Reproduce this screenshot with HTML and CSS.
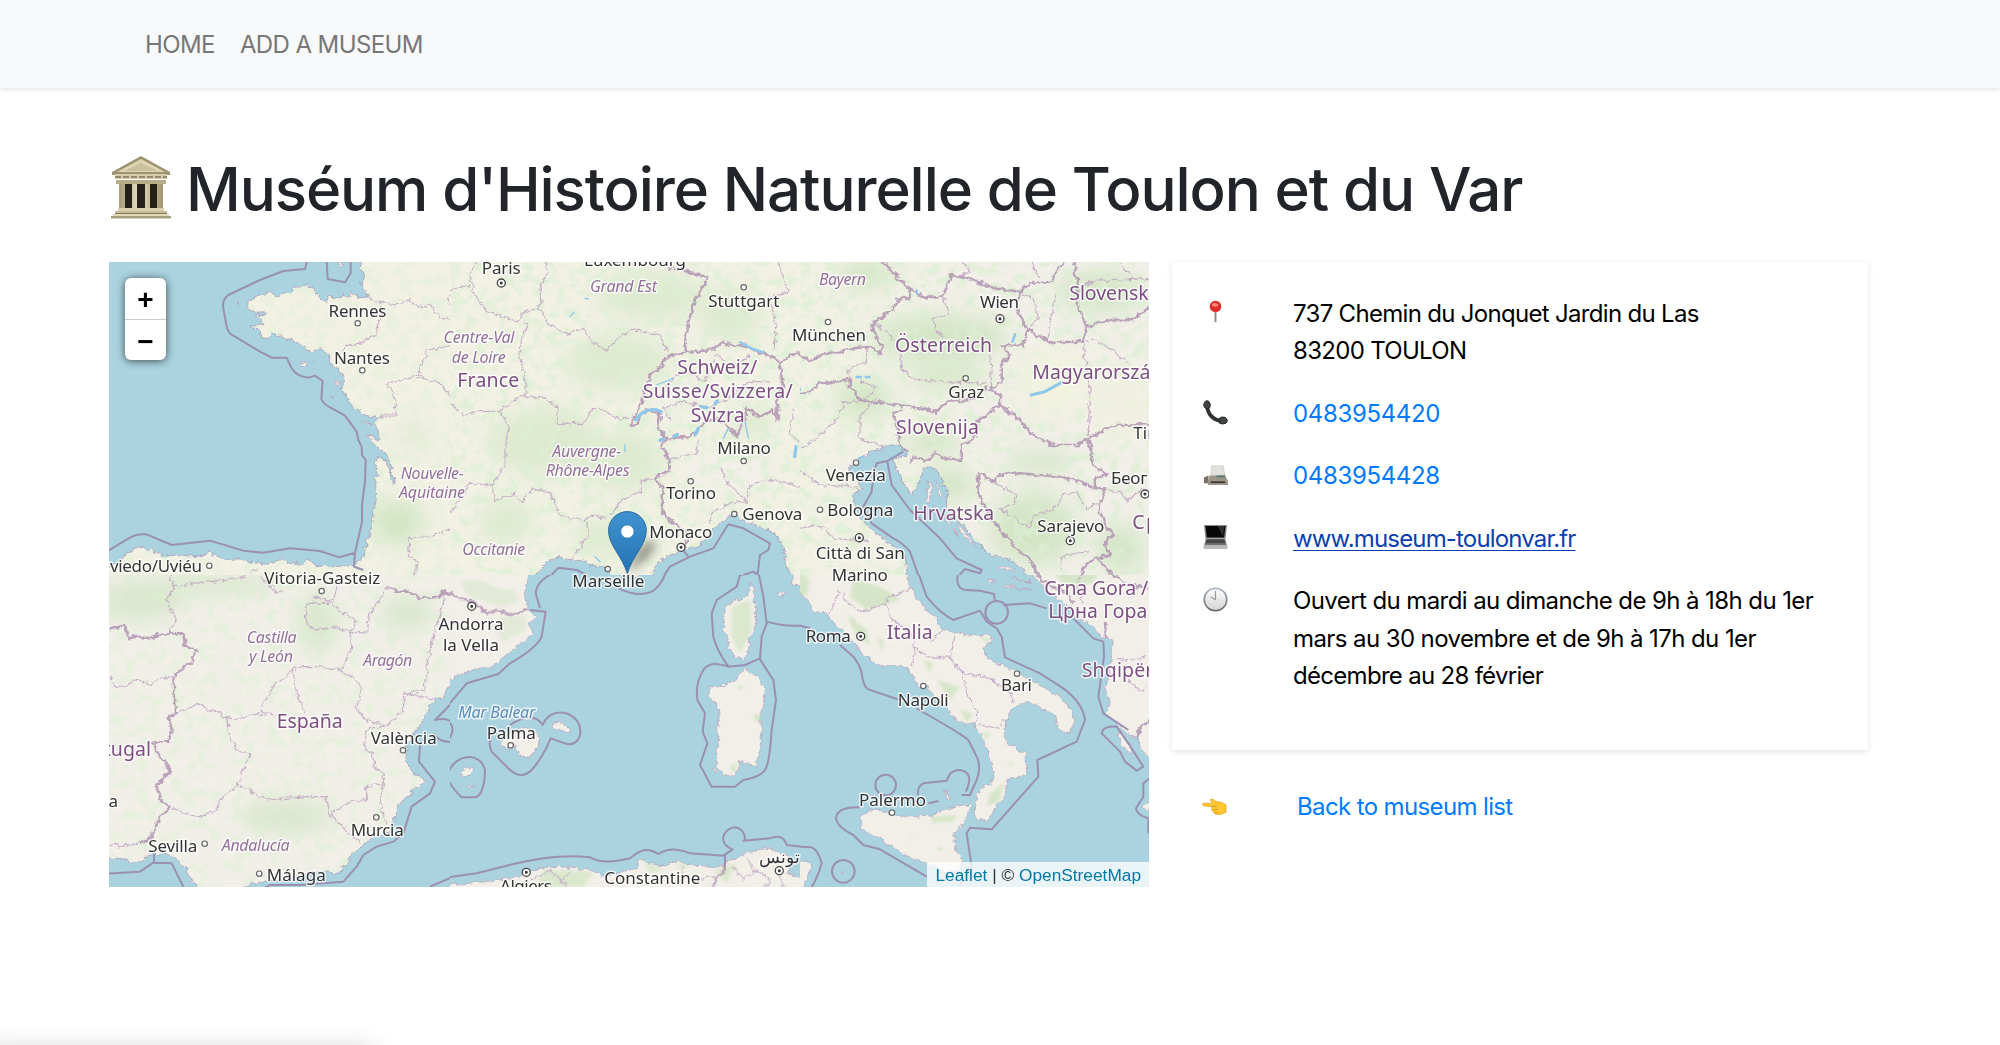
FILE: index.html
```html
<!DOCTYPE html>
<html lang="fr">
<head>
<meta charset="utf-8">
<title>Muséum d'Histoire Naturelle de Toulon et du Var</title>
<link rel="stylesheet" href="styles.css">
</head>
<body>
<nav class="navbar">
  <a href="#">HOME</a>
  <a href="#" class="nav-add">ADD A MUSEUM</a>
</nav>
<main class="container">
  <h1 class="title">
    <svg class="title-icon" viewBox="0 0 62 64">
      <defs><linearGradient id="stone" x1="0" x2="1"><stop offset="0" stop-color="#a59c78"/><stop offset=".45" stop-color="#e6dfc0"/><stop offset="1" stop-color="#a1976f"/></linearGradient></defs>
      <path d="M31 1 60 17v3H2v-3z" fill="#9d9370"/><path d="M31 4 55 17H7z" fill="#ddd5b3"/><path d="M31 8 48 16H14z" fill="#c9c09c"/>
      <path d="M5 19h52v5H5z" fill="#d5ccaa"/><path d="M5 22h52" stroke="#7d7458" stroke-width="1.6" stroke-dasharray="6 2"/><path d="M6 25h50v4H6z" fill="#b8ae88"/>
      <path d="M14 29h34v26H14z" fill="#272019"/>
      <path d="M9 29h6v25H9zM22 29h5v25h-5zM35 29h5v25h-5zM47 29h6v25h-6z" fill="url(#stone)"/>
      <path d="M8 53h46v4H8z" fill="#d9d1ae"/><path d="M5 56h52v3H5z" fill="#c5bc98"/><path d="M3 59h56v2H3z" fill="#e0d8b7"/><path d="M1 61h60v2.500H1z" fill="#a79e7c"/><path d="M5 58.500h52" stroke="#857c5e"/>
    </svg>
    <span class="title-text">Muséum d'Histoire Naturelle de Toulon et du Var</span>
  </h1>
  <div class="columns">
    <section class="map">
      <svg class="map-canvas" viewBox="109 262 1040 625">
        <defs>
          <filter id="terrain" x="0" y="0" width="100%" height="100%">
            <feTurbulence type="fractalNoise" baseFrequency=".028 .032" numOctaves="5" seed="8"/>
            <feColorMatrix values="0 0 0 0 .72  0 0 0 0 .86  0 0 0 0 .65  0 4.500 0 0 -2.100"/>
          </filter>
          <filter id="blur" x="-50%" y="-50%" width="200%" height="200%"><feGaussianBlur stdDeviation="28"/></filter>
          <filter id="shade" x="-50%" y="-50%" width="200%" height="200%"><feGaussianBlur stdDeviation="4"/></filter>
          <filter id="rough" filterUnits="userSpaceOnUse" x="-20" y="-20" width="1090" height="1000">
            <feTurbulence type="fractalNoise" baseFrequency=".06" numOctaves="3" seed="3"/>
            <feDisplacementMap in="SourceGraphic" scale="20" xChannelSelector="R" yChannelSelector="G"/>
          </filter>
          <linearGradient id="pin" x2="0" y2="1"><stop stop-color="#3f92cf"/><stop offset="1" stop-color="#2472b4"/></linearGradient>
          <linearGradient id="fade"><stop stop-color="#f2f1e4"/><stop offset=".6" stop-color="#f2efe9"/></linearGradient>
        </defs>

        <!-- south west: Spain and Portugal -->
        <svg x="100" y="570" width="350" height="320" viewBox="0 0 1050 960">
          <rect class="land" width="1050" height="960"/>
          <g class="green soft" filter="url(#blur)"><ellipse cx="560" cy="740" rx="140" ry="50"/><ellipse cx="650" cy="160" rx="60" ry="90"/><ellipse cx="120" cy="90" rx="130" ry="60"/><ellipse cx="920" cy="130" rx="80" ry="50"/><ellipse cx="350" cy="40" rx="200" ry="30"/></g>
          <rect width="1050" height="960" filter="url(#terrain)" opacity=".5"/>
          <g filter="url(#rough)">
            <path class="sea" d="M1080 300 1030 380 1005 388 950 480 920 520 915 560 935 605 975 635 950 655 905 690 880 750 870 790 820 800 760 850 720 910 670 905 520 930 470 940 430 950 400 990H1080ZM-30 865 60 865 115 878 160 850 215 855 260 900 265 915 290 945 285 990H-30Z"/>
            <path class="region" d="M30 320 45 355 80 345 110 325 150 345 180 325 220 320M30 825 80 830 125 815M205 190 230 150 200 90 220 55 210 0M220 50 330 35 430 20 470 0 530 70 550 60M620 100 690 100 770 155 750 185 700 170 650 180 620 165ZM640 80 700 95 710 50M750 185 800 190 810 130 860 55M750 190 755 230 725 300 660 290 590 290 520 350 490 400 485 430 410 445 380 440 290 402 230 430M580 310 590 370 615 430M485 430 530 435M725 300 780 340 780 380 765 410 800 450 860 470 910 420 915 370 975 360 985 260 995 220 1030 100 1030 60M915 370 1005 388M380 440 385 485 410 540 450 550 430 600 415 645 360 690 350 720 290 745 215 715M415 645 500 690 620 680 680 680 690 735 760 690 800 690 800 650 850 640 840 700 860 760M690 735 740 780 780 820M850 640 850 610 820 590 820 550 790 530 800 480 860 470"/>
            <path class="country" d="M20 180 75 165 85 205 110 200 155 205 185 190 250 190 255 230 290 240 270 280 230 310 220 325 228 430 205 440 215 480 205 512 160 518 180 560 210 600 170 650 180 690 210 715 180 740 155 800 125 820M860 50 890 65 920 65 965 85 1020 80 1030 65 1060 75"/>
          </g>
          <path class="maritime" d="M0 912 120 905 160 878 215 880 255 960M162 850V880M1060 395 1005 450Q1050 440 1060 465M1060 515Q1020 520 1000 490M960 520 957 575 1005 635 990 670 935 710 910 790 880 815 830 830 790 855 770 890 730 935 600 945 510 945 480 960M1060 920 990 950"/>
        </svg>

        <!-- south: Catalonia, islands and the Algerian coast -->
        <svg x="450" y="570" width="350" height="320" viewBox="0 0 1050 960">
          <rect class="water" width="1050" height="960"/>
          <g filter="url(#rough)">
            <path class="isle" d="M-30 335 60 302 130 285 200 230 245 195 240 160 255 145 245 125 232 110 225 60 235 20 260-30H-30ZM465-30 490 5 520 15 560 18 610 10 625-30ZM1030-30 1025 45 1080 50V-30ZM905 38 912 80 918 110 915 170 900 200 895 245 880 270 850 250 835 235 835 200 820 180 822 130 830 105 860 88 890 80 898 50ZM885 295 920 320 940 350 945 400 930 430 935 480 930 540 920 588 870 575 865 600 845 620 820 612 800 590 800 550 810 500 800 480 805 440 800 400 775 380 775 350 810 352 850 335 870 310ZM145 525 200 480 240 475 270 505 260 540 230 565 205 550 195 530 170 535ZM308 462 340 460 360 480 355 490 335 480 310 472ZM32 610 45 595 70 590 72 600 50 622 35 620ZM-30 990V945L60 940 190 925 240 905 300 890 370 895 430 900 460 920 560 895 570 870 600 880 650 890 680 868 720 885 800 890 830 880 870 855 950 832 1000 850 1030 880 1010 910 1080 930V990ZM50 640 70 650 55 652ZM980 70 1012 66 1000 76 984 76ZM780 590 800 600 795 606Z"/>
          </g>
          <g class="green" filter="url(#shade)"><path d="M30 40Q70 20 110 40T190 60L210 90Q160 120 120 100T60 85ZM120 160 160 140 230 140 225 180 160 215Z" opacity=".4"/><path d="M845 110 900 90 905 180 870 250 845 200Z" opacity=".6"/><path d="M840 585 860 585 850 610ZM910 430 930 440 920 460ZM865 345 880 350 870 360Z"/><path d="M280 900 430 905 400 950H260ZM580 875 640 900 600 910ZM680 880 720 890 690 900ZM790 900 860 880 830 940Z" opacity=".6"/></g>
          <g filter="url(#rough)">
            <path class="region" d="M240 930 300 900 350 950M360 900 330 945M700 890 690 950M740 930 800 920M850 890 880 930 920 900 960 930 940 960M890 860 910 900M975 890 1000 950"/>
            <path class="country" d="M-10 68 60 95 90 110 110 130 140 120 180 135 235 118M825 870 825 895 785 950"/>
          </g>
          <path class="maritime" d="M-5 922 80 910 200 880Q325 850 420 862 460 885 540 865C570 840 590 830 625 852 660 830 700 840 720 850L820 857 848 838C800 820 820 775 855 772 885 775 890 815 880 812L960 805Q1000 790 1010 825L1055 830M825 855 825 890M-5 405 50 340 145 312 180 280 Q260 235 275 200L287 125 240 120M270 115 257 70Q260 30 320 5L370-3M505 55Q570 85 610 62 640 40 650-3M925 5 870 15 860 50 800 90 785 130 790 200Q800 240 835 290L885 285 930 265 935 200 950 160 940 80ZM835 290Q780 270 760 300 735 340 742 390L765 430 758 485 772 520 750 585 785 650 855 650 880 630Q940 620 950 590 960 560 965 480L978 390 970 330 930 268M950 155Q1000 170 1055 167M180 465Q250 420 278 465C300 410 370 420 388 465 400 510 370 530 345 520L302 505Q280 560 245 600 215 630 180 600L125 545Q115 525 122 505M-5 610C10 555 90 540 105 600 105 640 95 680 75 682H35Q10 660-5 630M-5 455Q20 475-5 510"/>
        </svg>

        <!-- south east: southern Italy and the lower Adriatic -->
        <svg x="800" y="570" width="350" height="320" viewBox="0 0 1050 960">
          <rect class="water" width="1050" height="960"/>
          <g filter="url(#rough)">
            <path class="isle" d="M-30-30V40L20 90 40 120 80 130 110 170 160 215 180 245 240 290 300 290 330 300 340 325 360 350 385 345 400 380 445 415 450 435 490 465 520 458 545 500 570 560 580 610 575 640 540 655 520 720 530 750 570 748 590 700 615 680 620 630 680 612 678 550 620 520 610 490 620 450 640 410 680 395 760 430 775 475 810 492 825 450 800 400 760 370 690 330 640 300 560 265 548 235 580 210 570 195 500 195 430 180 400 140 350 90 330 50 320-30ZM515 705 490 760 465 790 465 830 485 870 480 900 440 905 400 885 340 865 290 840 230 800 185 780 182 745 210 720 250 722 270 735 310 742 400 735 450 715ZM660-30 730 50 790 100 830 140 880 170 910 205 940 210 935 260 915 350 930 400 915 430 950 460 990 500 1010 500 1030 545 1080 590V-30ZM-30 990V900L20 870 35 885 15 940 5 990ZM950 495 970 490 1000 550 980 545ZM1050 690 1030 710 1050 730ZM610 45 690 60 610 50ZM630 20 700 40 640 26ZM560 30 590 34 570 38ZM122 900 135 904 128 910ZM430 662 450 680 445 690Z"/>
          </g>
          <g class="green" filter="url(#shade)" opacity=".7"><path d="M-5 0 30 30 20 80-5 70ZM160 20 260 60 300 90 200 120 150 80ZM140 130 200 180 210 230 160 180ZM230 200 250 210 250 250ZM370 270 400 280 390 310ZM410 330 480 350 450 390ZM480 420 520 430 500 460ZM545 488 570 490 560 510ZM540 200 570 205 560 220ZM570 670 610 640 600 690 560 710ZM625 575 640 578 632 590ZM390 740 470 735 460 755 400 758ZM750 0H900L880 40 800 50ZM330 800 340 800 335 808ZM410 830 430 830 425 845Z"/></g>
          <g filter="url(#rough)">
            <path class="region" d="M130 60 130 90 185 125 260 100 265 80 335 55M120 60 90 130M260 100 270 140 340 200 345 255M345 230 380 260 450 265 460 220 465 195M430 180 390 215M450 265 490 310 560 320 635 370 640 400M490 310 500 370 530 430 530 460M540 465 600 475 605 450 625 450M345 255 330 290M850 0 830 40 850 100M950 265 1000 270 1035 260M985 330 1020 365 1040 350"/>
            <path class="country" d="M690-10 740 40 800 70 820 100M915 155 918 205M920 0 980 40 1050 60M1050 450 1020 470 1010 510"/>
          </g>
          <path class="maritime" d="M-5 165 30 175M120 225 160 260Q180 285 185 310 190 350 205 358L300 390M350 415 410 450Q480 490 505 510L530 560Q545 590 530 630L510 675H485M498 665C515 625 510 605 480 600 450 600 445 620 440 632L370 640Q350 650 355 675M385 700 415 693M180 712Q110 710 108 745 110 770 160 795L190 825 240 838 380 920M480 945 515 890 500 790 510 773 575 778 715 620 712 570 830 515 855 450Q850 400 790 355L720 310 615 262 605 200 590 175 560 155M350-5 380 80Q420 130 460 150L540 122 560 155M610 105 690 100 740 115M820 145 880 205 910 215 912 260 895 380 910 430 985 480M480-3C460 40 480 60 500 60L540 62 582 72 585 95M905 490Q910 465 950 470L985 520 1030 590 1010 602 975 575 960 545ZM1055 620 1030 640 1030 680 1008 715Q1010 735 1045 745V790M-5 830 35 832Q55 840 65 880 55 920 30 960"/>
          <g class="maritime"><circle cx="257" cy="645" r="31"/><circle cx="130" cy="904" r="34"/><circle cx="590" cy="127" r="34"/></g>
        </svg>

        <!-- north west: Bay of Biscay and Brittany -->
        <svg x="100" y="255" width="350" height="320" viewBox="0 0 1050 960">
          <rect class="land warm" width="1050" height="960"/>
          <g class="green" filter="url(#blur)" opacity=".8"><ellipse cx="890" cy="800" rx="80" ry="65"/><ellipse cx="940" cy="550" rx="50" ry="50" opacity=".3"/></g>
          <rect width="1050" height="960" filter="url(#terrain)" opacity=".45"/>
          <g filter="url(#rough)">
            <path class="sea" d="M-30-30H785L782 40 790 60 783 90 795 110 805 122 780 125 760 118 750 112 742 130 735 118 720 125 705 130 690 122 680 138 665 138 655 125 640 100 628 97 622 84 608 95 580 97 568 110 545 118 530 122 510 110 490 120 470 125 445 138 443 160 465 170 500 175 490 182 465 180 480 195 496 205 470 212 450 213 480 225 487 250 505 250 515 235 540 245 575 255 600 268 620 285 640 290 660 280 690 300 688 325 715 345 735 375 722 400 745 430 765 460 800 480 830 490 825 510 840 540 835 560 825 545 805 535 825 570 860 600 875 640 886 685 880 685 868 640 855 615 830 605 830 640 825 740 815 800 800 870 785 915 765 930 740 930 710 938 680 932 650 935 625 915 600 928 560 920 550 912 520 920 490 928 450 920 420 912 400 915 360 905 330 895 300 902 200 902 170 898 160 880 140 885 130 872 110 880 85 890 65 915 30 930-30 940Z"/>
            <path class="isle" d="M600 325 622 322 618 334 605 330ZM702 378 718 382 712 390ZM692 424 708 428ZM785 498 815 506 790 504ZM803 535 820 545 818 560ZM405 148 415 150ZM712 22 735 24 722 34ZM635 318 645 325Z"/>
            <path class="region" d="M800 122 815 135 840 140 880 150 930 135 955 155 990 150 1020 185 1060 195M840 150 838 200 825 240 800 250 780 268 735 272 728 290M1060 270 985 285 965 320 955 360M830 490 850 483 888 483 885 430 870 400 857 385 900 375 955 362 990 375 1020 385 1060 440M1060 820 1000 840 930 850 925 900 950 920 945 970M1060 110 1040 130 1050 150M440 970 470 940"/>
          </g>
          <path class="maritime" d="M622 15 615 42 550 48 480 75 385 120Q365 135 370 160L380 215Q385 235 400 242L480 290 515 308 560 308 575 340Q590 365 625 368L645 362 668 378 664 432Q670 447 690 457L735 482 770 530 775 555 785 575 786 600 797 615 795 680 786 750 786 800 765 893 718 907 660 888 570 880 490 893 430 887 330 857 215 870 140 838Q110 835 90 848L20 890M680 15 683 72 735 82 752 55V15M765 893 762 935 790 945"/>
        </svg>

        <!-- north: France, Switzerland and Piedmont -->
        <svg x="450" y="255" width="350" height="320" viewBox="0 0 1050 960">
          <rect class="land warm" width="1050" height="960"/>
          <g class="green" filter="url(#blur)" opacity=".5"><ellipse cx="600" cy="120" rx="160" ry="70"/><ellipse cx="500" cy="320" rx="150" ry="80"/><ellipse cx="280" cy="560" rx="160" ry="100"/><ellipse cx="170" cy="800" rx="80" ry="60"/><ellipse cx="520" cy="620" rx="110" ry="90"/><ellipse cx="840" cy="180" rx="90" ry="80"/><ellipse cx="900" cy="500" rx="60" ry="40"/><ellipse cx="480" cy="850" rx="110" ry="50"/></g>
          <g fill="#f2efe9" filter="url(#blur)"><ellipse cx="830" cy="650" rx="150" ry="50"/><ellipse cx="650" cy="430" rx="60" ry="60" opacity=".6"/></g>
          <rect width="1050" height="960" filter="url(#terrain)" opacity=".75"/>
          <g filter="url(#rough)">
            <path class="sea" d="M235 990 270 945 300 915 335 903 350 912 400 918 420 930 470 938 490 990ZM590 990 615 935 650 905 700 885 760 865 790 820 840 780 850 776 880 795 940 820 980 840 1000 880 1010 930 1030 990Z"/>
            <path class="region" d="M80 15 60 55 70 110 110 170 160 185 200 200 225 170 265 160 275 130 270 95 290 60 290 15M0 105 60 90M265 160 300 210 350 235 400 220 430 265 470 285 510 245 550 222 590 235 625 235 655 290M220 200 232 215 210 260 215 330 228 380 228 420 190 435 150 468 90 470 35 478-5 440M228 425 290 430 320 460 325 505 400 505 430 460 460 465 500 490 540 490M150 470 178 520 165 580 165 630 125 690 60 685 40 720-5 780M125 690 135 740 190 715 215 740 250 700 300 710 330 780 390 795 410 800 415 840 375 900 360 920M400 795 430 780 470 790M480 780 520 730 575 710 570 680 615 670M660 610 740 595 745 555M810 635 830 680 890 740 900 690 950 670 1060 695M775 810 790 770 850 740 890 745M640 400 700 340 760 380 800 300 850 340 900 300M640 460 700 440 780 460 850 420 900 380 960 380M965 150 980 220 970 290M985 22 1015 110 960 130M640 460 660 500M1030 460 1020 540 1050 560"/>
            <path class="country" d="M650 40 700 45 775 68 735 135 715 200 705 290 760 290 800 275 820 260 850 275 880 270 930 295 960 300 990 325 1020 300 1060 295M705 290 650 305 635 335 600 360 585 410 570 450 540 510 565 505 570 480 600 465 630 470 625 520 650 550 720 545 770 500 800 490 840 520 860 545 885 490 890 460 930 485 965 465 985 495 980 440 1000 400 990 330M650 550 635 570 660 620 655 650 615 670 640 700 635 760 650 790 690 815 715 840 705 875"/>
          </g>
          <g class="lake"><path d="M556 495Q590 450 634 470" stroke-width="9"/><path d="M870 262 905 280 940 292" stroke-width="7"/><path d="M735 540 745 520M752 455 770 458M795 445 802 438M672 545 682 538M630 556 640 552M1038 575 1034 605" stroke-width="10"/><path d="M820 550 835 520M885 500 895 550M620 390 670 370M525 570V590M360 185 372 172M405 130 415 132M435 905 450 920" stroke-width="4"/></g>
          <path class="maritime" d="M640 965 660 935 720 905 790 880 835 808 880 820 960 865 955 885 930 900 922 965M300 965 325 938 380 945 410 960M880 960 910 950 925 960M695 880 715 905"/>
        </svg>

        <!-- north east: Alps, Pannonia and the upper Adriatic -->
        <svg x="800" y="255" width="350" height="320" viewBox="0 0 1050 960">
          <rect fill="url(#fade)" width="1050" height="960"/>
          <g class="green" filter="url(#blur)" opacity=".75"><ellipse cx="420" cy="250" rx="200" ry="70"/><ellipse cx="190" cy="430" rx="80" ry="60"/><ellipse cx="440" cy="370" rx="120" ry="30"/><ellipse cx="400" cy="560" rx="80" ry="40"/><ellipse cx="900" cy="110" rx="130" ry="60"/><ellipse cx="720" cy="620" rx="100" ry="30"/><ellipse cx="450" cy="690" rx="70" ry="50"/><ellipse cx="700" cy="820" rx="130" ry="110"/><ellipse cx="960" cy="880" rx="70" ry="70"/><ellipse cx="200" cy="60" rx="90" ry="40"/></g>
          <rect width="1050" height="960" filter="url(#terrain)" opacity=".75"/>
          <g filter="url(#blur)" opacity=".9"><ellipse cx="760" cy="380" rx="100" ry="110" fill="#f2f3df"/><ellipse cx="960" cy="440" rx="90" ry="120" fill="#f1f1e0"/><ellipse cx="140" cy="640" rx="60" ry="50" fill="#f2efe9"/></g>
          <g filter="url(#rough)">
            <path class="sea" d="M245 578 280 572 315 580 325 600 300 605 275 615 290 640 310 680 335 720 350 700 365 655 380 638 410 645 440 700 440 760 480 800 520 850 570 900 620 910 650 930 720 990H325L315 900 280 875 210 820 170 780 160 720 185 700 150 650 150 630 200 600Z"/>
            <path class="isle" d="M385 675 395 700 390 745 380 740ZM405 675 430 720 420 730ZM430 775 480 850 440 800ZM470 800 530 880 480 830ZM590 935 650 940 620 948ZM400 750 420 785 405 770Z"/>
            <path class="region" d="M490 15 510 50 480 65M690 15 720 70M765 120 750 200 745 250M665 120 700 130 715 190 690 215M430 125 445 180 395 190 410 230 430 245M215 205 260 230 280 260M305 290 300 330 340 375 430 380 560 385M150 370 145 340 200 320 200 280M0 580 40 560 80 520 115 490 130 445 200 430M230 430 180 480 180 550 240 570 245 590M860 250 850 290 870 400 865 540M870 250 930 280 990 330M-5 640 60 690 170 695 180 715M-5 820 60 810 100 850 210 860M550 670 600 690 650 720 640 750 600 760 690 820 700 780 760 765 790 720 830 710 860 760 900 740M920 705 960 710 985 735 1030 700M840 100 870 80 960 75 1060 70M570 300 575 400M960 22 1000 70M780 940 790 900 870 890M180 380 230 400 200 430"/>
            <path class="country" d="M245 15 290 65 330 100 380 130 430 120 455 60 520 75 580 100 660 110 690 85 750 80 795 15M330 100 325 130 290 135 280 165 215 205 225 240 245 270 240 300 215 275 160 280 60 300 30 318-5 300M660 110 650 160 680 220 750 262 850 260 860 215 930 195 1000 195 1050 155M820 15 835 100 830 150 860 215M680 220 670 270 605 275 630 300 605 330 605 380 570 405 600 420 600 450 560 480 530 500 525 550 485 570 485 615 430 610 405 590 385 615 340 605 330 620M-5 415 35 410 60 385 150 375 150 395 180 435 300 450 410 470 440 440 510 435 560 400M325 595 300 570 290 500 280 480 310 460M600 450 640 480 700 540 760 570 830 570 865 550 940 510 1060 508M865 550 880 630 920 660 885 670 885 700 845 680 780 665 720 660 660 655 600 660 575 685 550 655 535 660 535 720 580 800 640 870 690 915 720 970M885 700 915 700 895 760 920 820 940 830 915 870 930 900 880 910 850 940 845 970M890 910 950 970"/>
          </g>
          <g class="lake"><path d="M693 420 735 410 785 382" stroke-width="9"/><path d="M645 238 638 260M170 366H182M198 366H208" stroke-width="8"/><path d="M0 400V405M350 105 352 118M175 610 190 605" stroke-width="6"/></g>
          <path class="maritime" d="M358 970 330 890Q310 865 280 850L215 805 190 755 215 710 222 650 230 625 262 618 310 590M262 620 275 690 330 765 420 850 470 910 545 945 540 955 495 942 470 970"/>
        </svg>

        <g class="dots">
          <circle cx="357.700" cy="323.300" r="2.700"/><circle cx="362.300" cy="370.300" r="2.700"/><circle cx="743.700" cy="287.300" r="2.700"/><circle cx="828" cy="322" r="2.700"/><circle cx="965.700" cy="378.300" r="2.700"/><circle cx="743.700" cy="461" r="2.700"/><circle cx="690.700" cy="481.300" r="2.700"/><circle cx="734.300" cy="514" r="2.700"/><circle cx="856" cy="462.700" r="2.700"/><circle cx="820" cy="509.700" r="2.700"/><circle cx="209.300" cy="565.700" r="2.700"/><circle cx="321.700" cy="591" r="2.700"/><circle cx="403" cy="750.300" r="2.700"/><circle cx="376.300" cy="817.300" r="2.700"/><circle cx="204.700" cy="843.700" r="2.700"/><circle cx="259.300" cy="873.700" r="2.700"/><circle cx="607.700" cy="569" r="2.700"/><circle cx="510.700" cy="745.300" r="2.700"/><circle cx="923.300" cy="686" r="2.700"/><circle cx="1017" cy="673.700" r="2.700"/><circle cx="892" cy="812.700" r="2.700"/>
        </g>
        <g class="dots capitals">
          <circle cx="501.300" cy="283" r="4"/><circle cx="1000" cy="318.700" r="4"/><circle cx="681" cy="547.300" r="4"/><circle cx="1070.300" cy="540.700" r="4"/><circle cx="1145" cy="494" r="4"/><circle cx="859.300" cy="537.700" r="4"/><circle cx="471.700" cy="606.300" r="4"/><circle cx="779.300" cy="870.700" r="4"/><circle cx="526.300" cy="872.300" r="4"/><circle cx="860.700" cy="636.300" r="4"/>
        </g>
        <path class="cores" d="M501.300 283h0M1000 318.700h0M681 547.300h0M1070.300 540.700h0M1145 494h0M859.300 537.700h0M471.700 606.300h0M779.300 870.700h0M526.300 872.300h0M860.700 636.300h0"/>

        <g class="label city">
          <text x="328.500" y="316.500" textLength="58">Rennes</text><text x="334" y="364" textLength="56">Nantes</text><text x="481.700" y="274" textLength="39">Paris</text><text x="584" y="265.500" textLength="102">Luxembourg</text><text x="708.300" y="306.700" textLength="71">Stuttgart</text><text x="980" y="308.300" textLength="39">Wien</text><text x="792" y="341" textLength="74">München</text><text x="948.300" y="397.700" textLength="36">Graz</text><text x="717.300" y="454.300" textLength="53.500">Milano</text><text x="666" y="499.300" textLength="50">Torino</text><text x="649.300" y="537.700" textLength="63">Monaco</text><text x="742.300" y="520" textLength="60">Genova</text><text x="825.700" y="480.700" textLength="60">Venezia</text><text x="827.300" y="516" textLength="66">Bologna</text><text x="1037.300" y="531.700" textLength="67">Sarajevo</text><text x="1111" y="484" textLength="66">Београд</text><text x="1133.300" y="439.300" textLength="79">Timișoara</text><text x="815.700" y="559.300" textLength="89">Città di San</text><text x="831.700" y="581" textLength="56">Marino</text><text x="97" y="571.700" textLength="105">Oviedo/Uviéu</text><text x="264.300" y="584" textLength="116">Vitoria-Gasteiz</text><text x="370.700" y="744" textLength="66">València</text><text x="68" y="807.300" textLength="50">Lisboa</text><text x="350.700" y="835.700" textLength="53">Murcia</text><text x="148.300" y="851.700" textLength="49">Sevilla</text><text x="266.700" y="881" textLength="59">Málaga</text><text x="572.300" y="586.700" textLength="72">Marseille</text><text x="438.500" y="630" textLength="65">Andorra</text><text x="443" y="651" textLength="56">la Vella</text><text x="486.700" y="739" textLength="49">Palma</text><text x="604.300" y="884" textLength="96">Constantine</text><text x="779" y="863" text-anchor="middle">تونس</text><text x="500" y="891.700" textLength="52">Algiers</text><text x="805.700" y="642.300" textLength="45">Roma</text><text x="897.700" y="706" textLength="51">Napoli</text><text x="1001" y="691" textLength="31">Bari</text><text x="859" y="806" textLength="67">Palermo</text>
        </g>
        <g class="label nation">
          <text x="457.300" y="387.300" textLength="62">France</text><text x="1069.300" y="300" textLength="91">Slovensko</text><text x="895" y="352.300" textLength="97">Österreich</text><text x="1032.300" y="379.300" textLength="130">Magyarország</text><text x="896" y="434.300" textLength="83">Slovenija</text><text x="677.300" y="374.300" textLength="80">Schweiz/</text><text x="642.700" y="398.300" textLength="150">Suisse/Svizzera/</text><text x="690.700" y="421.700" textLength="54">Svizra</text><text x="913.300" y="520" textLength="81">Hrvatska</text><text x="1132.300" y="529.300" textLength="70">Србија</text><text x="276.700" y="728.300" textLength="66">España</text><text x="72" y="756" textLength="79">Portugal</text><text x="886.700" y="639" textLength="46">Italia</text><text x="1044.300" y="595" textLength="104">Crna Gora /</text><text x="1048.300" y="618.300" textLength="99">Црна Гора</text><text x="1081.700" y="677.300" textLength="88">Shqipëria</text>
        </g>
        <g class="label area">
          <text x="590" y="291.700" textLength="67">Grand Est</text><text x="819" y="284.700" textLength="47">Bayern</text><text x="443.500" y="343.300" textLength="71">Centre-Val</text><text x="451.700" y="362.700" textLength="54">de Loire</text><text x="552.300" y="456.700" textLength="69">Auvergne-</text><text x="545.700" y="475.700" textLength="84">Rhône-Alpes</text><text x="462.300" y="555" textLength="63">Occitanie</text><text x="400.700" y="479.300" textLength="63">Nouvelle-</text><text x="399" y="498.300" textLength="66">Aquitaine</text><text x="246.700" y="643.300" textLength="50">Castilla</text><text x="249" y="662.300" textLength="44">y León</text><text x="363.300" y="666" textLength="49">Aragón</text><text x="221.700" y="851" textLength="68">Andalucía</text><text class="marine" x="458.300" y="717.700" textLength="77">Mar Balear</text>
        </g>
        <path d="M628 574 634 558Q642 541 652 540 660 546 648 558Z" fill="#222" opacity=".4" filter="url(#shade)"/>
        <path d="M627.400 573.500C622 556 608.500 545 608.500 530.500A18.900 18.900 0 0 1 646.300 530.500C646.300 545 632.500 556 627.400 573.500Z" fill="url(#pin)" stroke="#2e6c97" stroke-width="1"/>
        <circle cx="627.400" cy="531.500" r="6.600" fill="#fff" stroke="#3680b6" stroke-width=".8"/>
      </svg>
      <div class="zoom"><button>+</button><button>−</button></div>
      <div class="credit"><a href="#">Leaflet</a> | © <a href="#">OpenStreetMap</a></div>
    </section>
    <aside class="side">
      <div class="card">
        <div class="row">
          <svg class="icon" viewBox="0 0 26 26"><path d="M13 11v12" stroke="#93877f" stroke-width="2"/><circle cx="13" cy="6.700" r="6" fill="#df2f2a"/><ellipse cx="12.500" cy="5" rx="3.300" ry="2" fill="#ff817a"/></svg>
          <p class="address">737 Chemin du Jonquet Jardin du Las<br>83200 TOULON</p>
        </div>
        <div class="row">
          <svg class="icon" viewBox="0 0 26 26"><path d="M4 3C4 15 11 22 22 22" fill="none" stroke="#303234" stroke-width="4"/><path d="M1 4Q2 0 5.500 1 9 4 7 8L4 9Q0 8 1 4ZM17 19Q19 17 23 18 27 21 24 24 20 26 17 24Z" fill="#424547" stroke="#222"/></svg>
          <p><a class="tel" href="#">0483954420</a></p>
        </div>
        <div class="row">
          <svg class="icon" viewBox="0 0 26 26"><path d="M9 4h12l2 11H8z" fill="#e3e1dc" stroke="#c2beb6" stroke-width=".6"/><path d="M7 14h16l3 6v4H5v-4z" fill="#9d9487"/><path d="M1 16l5-2-1 8H1z" fill="#776f65"/><path d="M14 15h9" stroke="#547d76" stroke-width="2"/><path d="M8 21h15" stroke="#352e28" stroke-width="1.600"/></svg>
          <p><a class="tel" href="#">0483954428</a></p>
        </div>
        <div class="row">
          <svg class="icon" viewBox="0 0 26 26"><path d="M1 0h24l-1.500 14h-21z" fill="#8c8c8c"/><path d="M2.500 1h21L22 13H4z" fill="#080808"/><path d="M15 1h7l-1 11z" fill="#303030"/><path d="M3 14h20l2 8H1z" fill="#777"/><path d="M4 15h18l1 4H3z" fill="#454545"/><path d="M.500 21h25v4H.500z" fill="#bbb"/></svg>
          <p><a class="site" href="#">www.museum-toulonvar.fr</a></p>
        </div>
        <div class="row">
          <svg class="icon" viewBox="0 0 26 26"><defs><linearGradient id="rim" x2="0" y2="1"><stop stop-color="#a9b4c2"/><stop offset="1" stop-color="#666"/></linearGradient><linearGradient id="face" x2="0" y2="1"><stop stop-color="#fff"/><stop offset="1" stop-color="#d2d2d2"/></linearGradient></defs><circle cx="13" cy="13" r="11.700" fill="url(#face)" stroke="url(#rim)" stroke-width="1.700"/><path d="M13 4v9L8 10.500" fill="none" stroke="#999" stroke-width="1.200"/></svg>
          <p class="hours">Ouvert du mardi au dimanche de 9h à 18h du 1er<br>mars au 30 novembre et de 9h à 17h du 1er<br><span class="hours-end">décembre au 28 février</span></p>
        </div>
      </div>
      <div class="back">
        <svg class="icon" viewBox="0 0 26 26"><path d="M1 7.500Q0 9.500 2 10.500L10 11Q10 17 13 17.500 13 20 20 19L25 17V9L20 6.500Q14 6 11 3.500 8 2 9 5L11 7.500Z" fill="#ffc832" stroke="#e2a01c" stroke-width=".7"/><path d="M10 11l5-.5M11 14.500l5-.5M13 17.500l4-.5" stroke="#d08d14" stroke-width=".9" fill="none"/></svg>
        <a class="back-link" href="#">Back to museum list</a>
      </div>
    </aside>
  </div>
</main>
<div class="bottom-shadow"></div>
</body>
</html>
```
FILE: styles.css
```css
* { box-sizing: border-box; }
body {
  margin: 0;
  height: 1045px;
  overflow: hidden;
  position: relative;
  background: #fff;
  color: #000;
  font: 24px/37.5px Inter, sans-serif;
  letter-spacing: -0.8px;
}
a { color: #007bff; text-decoration: none; }
.navbar {
  display: flex;
  gap: 25px;
  height: 88px;
  padding: 26px 145px 0;
  background: #f8f9fa;
  box-shadow: 0 2px 5px rgba(0, 0, 0, .1);
}
.navbar a { color: #777; white-space: nowrap; letter-spacing: -0.6px; }
.container { width: 1759px; margin-left: 109px; padding-top: 64px; }
.title {
  display: flex;
  align-items: flex-start;
  gap: 14px;
  height: 110px;
  margin: 0;
  color: #212529;
  font-size: 60px;
  font-weight: 500;
  line-height: 74px;
  letter-spacing: -1.08px;
}
.title-icon { width: 62px; height: 64px; margin: 3px 0 0 1px; flex: none; }
.title-text { white-space: nowrap; }
.columns { display: flex; gap: 23px; }
.map { position: relative; flex: none; width: 1040px; height: 625px; }
.map-canvas { display: block; width: 1040px; height: 625px; }

.land { fill: #f2efe9; }
.land.warm { fill: #f2f1e4; }
.water { fill: #aad3df; }
.sea { fill: #aad3df; stroke: #a58fae; stroke-width: 2; }
.isle { fill: #f2efe9; stroke: #b49db8; stroke-width: 2; }
.green { fill: #cbe2bb; }
.green.soft { opacity: .6; }
.region { fill: none; stroke: #c0a5c2; stroke-width: 3.6; opacity: .85; }
.country { fill: none; stroke: #b095b2; stroke-width: 7.5; opacity: .85; stroke-linejoin: round; }
.maritime { fill: none; stroke: #9a90b3; stroke-width: 6; stroke-linejoin: round; }
.lake { fill: none; stroke: #8ec7ea; stroke-linecap: round; }

.label {
  font-family: "Noto Sans", sans-serif;
  letter-spacing: 0;
  paint-order: stroke;
  stroke: rgba(255, 255, 255, .75);
  stroke-width: 3px;
  stroke-linejoin: round;
}
.city { font-size: 17px; fill: #333; }
.nation { font-size: 19.5px; fill: #7d4f82; }
.area { font-size: 16px; font-style: italic; fill: #94709a; }
.area .marine { fill: #5b8dc0; }
.dots { fill: #fff; stroke: #666; stroke-width: 1.2; }
.capitals { stroke: #444; stroke-width: 1.3; }
.cores { stroke: #333; stroke-width: 3; stroke-linecap: round; }

.zoom {
  position: absolute;
  left: 16px;
  top: 16px;
  width: 41px;
  border-radius: 6px;
  background: #fff;
  box-shadow: 0 1px 8px rgba(0, 0, 0, .65);
}
.zoom button {
  display: block;
  width: 41px;
  height: 41px;
  padding: 0;
  border: 0;
  background: none;
  color: #000;
  font: bold 28px/43px "Liberation Sans", sans-serif;
}
.zoom button + button { border-top: 1px solid #ccc; }
.credit {
  position: absolute;
  right: 0;
  bottom: 0;
  height: 25px;
  padding: 1px 8px 0;
  background: rgba(255, 255, 255, .75);
  color: #333;
  font: 17.3px/25px "Liberation Sans", sans-serif;
  letter-spacing: 0;
  white-space: nowrap;
}
.credit a { color: #0078a8; }

.side { width: 697px; }
.card {
  height: 488px;
  padding: 32.5px 31px;
  background: #fff;
  box-shadow: 0 2px 6px rgba(0, 0, 0, .11);
}
.row { display: flex; gap: 65px; margin-bottom: 25px; }
.row p { margin: 0; white-space: nowrap; }
.icon { width: 25px; height: 25px; margin-top: 5px; flex: none; }
.address { letter-spacing: -0.69px; }
.tel { letter-spacing: -0.35px; }
.hours { letter-spacing: -0.59px; }
.hours-end { letter-spacing: -0.7px; }
.site { color: #0a3fae; letter-spacing: -0.83px; text-decoration: underline; text-decoration-thickness: 1px; text-underline-offset: 3px; }
.back { display: flex; gap: 70px; padding: 38px 30px 0; white-space: nowrap; }
.back .icon { margin-top: 8px; }
.back-link { letter-spacing: -0.63px; }

.bottom-shadow {
  position: absolute;
  left: -10px;
  top: 1047px;
  width: 385px;
  height: 20px;
  box-shadow: 0 0 22px rgba(0, 0, 0, .16);
}
```
